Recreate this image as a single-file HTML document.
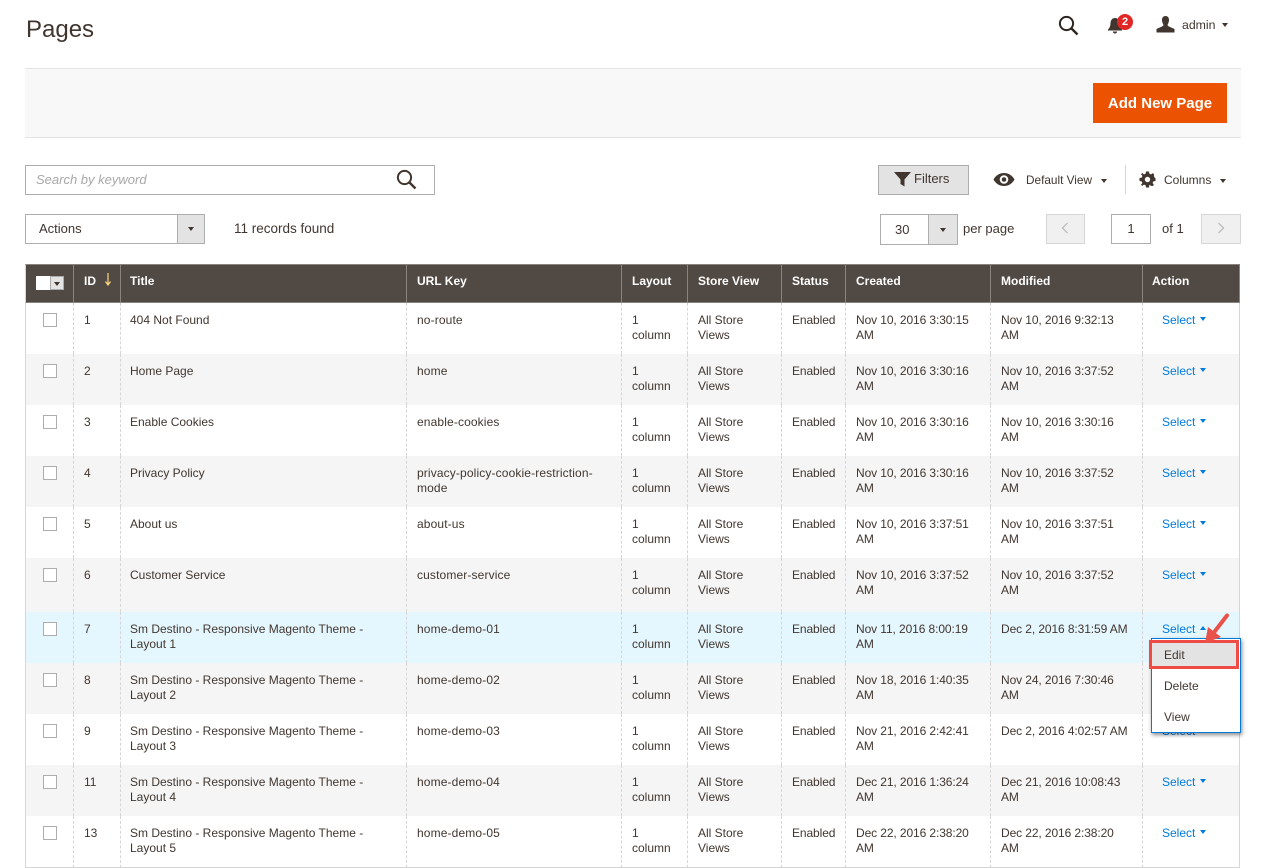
<!DOCTYPE html>
<html><head><meta charset="utf-8"><title>Pages</title>
<style>
*{box-sizing:border-box}
html,body{margin:0;padding:0;background:#fff}
body{width:1262px;height:868px;position:relative;overflow:hidden;font-family:"Liberation Sans",sans-serif;font-size:13px;color:#41362f}
.a{position:absolute;white-space:nowrap}
.box{position:absolute;border:1px solid #adadad;background:#fff}
.car{position:absolute;width:0;height:0;border-left:3px solid transparent;border-right:3px solid transparent;border-top:4px solid #41362f}
table{position:absolute;left:25px;top:264px;width:1215px;border-collapse:separate;border-spacing:0;table-layout:fixed;line-height:15px;font-size:12px}
th{height:39px;background:#514943;color:#fff;font-weight:bold;text-align:left;padding:0 0 4px 10px;border-left:1px solid #8a837f;border-top:1px solid #8a837f;border-bottom:1px solid #8a837f;font-size:12px;white-space:nowrap}
th:nth-child(3),th:nth-child(10){padding-left:9px}
th:last-child,td:last-child{border-right:1px solid #d6d6d6}
th:last-child{border-right-color:#8a837f}
td{vertical-align:top;padding:10px 4px 0 10px;border-left:1px dashed #d6d6d6;height:51px;white-space:nowrap}
td:first-child{border-left:1px solid #d6d6d6;padding:10px 0 0 17px}
th:first-child{border-left-color:#d6d6d6}
tr.g td{background:#f5f5f5}
tr.b td{background:#e5f7fe}
tr.l td{border-bottom:1px solid #d6d6d6;height:52px}
tr.t td{height:54px}
i.c{display:block;width:14px;height:14px;border:1px solid #adadad;background:#fff}
td:nth-child(3){padding-left:9px}
td:nth-child(4){letter-spacing:.13px}
td:nth-child(7),td:nth-child(8),td:nth-child(9){letter-spacing:-.1px}
td:nth-child(10){padding-left:19px;color:#007bdb}
td:nth-child(10) b{display:inline-block;width:0;height:0;margin:0 0 3px 5px;border-left:3px solid transparent;border-right:3px solid transparent;border-top:4px solid #007bdb}
</style></head><body>

<div class="a" style="left:26px;top:14px;font-size:24px;line-height:32px">Pages</div>

<svg class="a" style="left:1058px;top:15px" width="21" height="21" viewBox="0 0 21 21"><circle cx="8.5" cy="8.5" r="6.6" fill="none" stroke="#2e2520" stroke-width="2"/><path d="M13.5 13.5L19.5 19.5" stroke="#2e2520" stroke-width="2.4"/></svg>
<svg class="a" style="left:1107px;top:17px" width="16" height="17" viewBox="0 0 16 17"><path d="M8 1C5 1 3.600 3.500 3.500 6C3.400 9 2.800 10.800 1 12.500V13.500H15V12.500C13.200 10.800 12.600 9 12.500 6C12.400 3.500 11 1 8 1Z" fill="#41362f"/><path d="M6 14.500a2 2 0 0 0 4 0z" fill="#41362f"/></svg>
<div class="a" style="left:1117px;top:14px;width:16px;height:16px;border-radius:8px;background:#e22626;color:#fff;font-size:11px;font-weight:bold;line-height:16px;text-align:center">2</div>
<svg class="a" style="left:1156px;top:15px" width="19" height="18" viewBox="0 0 19 18"><path d="M9.500 1C7 1 5.800 3 6 5.500C6.200 7.500 7 9 7.500 10C7.500 11.500 3 12.500 0.500 14V17.500H18.500V14C16 12.500 11.500 11.500 11.500 10C12 9 12.800 7.500 13 5.500C13.200 3 12 1 9.500 1Z" fill="#41362f"/></svg>
<div class="a" style="left:1182px;top:18px;line-height:15px;font-size:12.3px">admin</div>
<div class="car" style="left:1222px;top:23px"></div>

<div class="a" style="left:25px;top:68px;width:1216px;height:70px;background:#f8f8f8;border-top:1px solid #e3e3e3;border-bottom:1px solid #e3e3e3"></div>
<div class="a" style="left:1093px;top:83px;width:134px;height:40px;background:#eb5202;color:#fff;font-weight:bold;font-size:15px;line-height:41px;text-align:center">Add New Page</div>

<div class="box" style="left:25px;top:165px;width:410px;height:30px"></div>
<div class="a" style="left:36px;top:172px;line-height:15px;font-style:italic;color:#a8a8a8">Search by keyword</div>
<svg class="a" style="left:396px;top:169px" width="21" height="21" viewBox="0 0 21 21"><circle cx="8.500" cy="8.500" r="6.600" fill="none" stroke="#41362f" stroke-width="2"/><path d="M13.500 13.500L19.500 19.500" stroke="#41362f" stroke-width="2.400"/></svg>

<div class="box" style="left:25px;top:214px;width:180px;height:30px"></div>
<div class="a" style="left:177px;top:214px;width:28px;height:30px;background:#e3e3e3;border:1px solid #adadad"></div>
<div class="car" style="left:188px;top:227px"></div>
<div class="a" style="left:39px;top:221px;line-height:15px">Actions</div>
<div class="a" style="left:234px;top:221px;line-height:15px;font-size:13.5px">11 records found</div>

<div class="a" style="left:878px;top:165px;width:91px;height:30px;background:#e3e3e3;border:1px solid #adadad"></div>
<svg class="a" style="left:894px;top:172px" width="17" height="15" viewBox="0 0 17 15"><path d="M0 0H17L10.500 7.500V14.500L6.500 12V7.500Z" fill="#41362f"/></svg>
<div class="a" style="left:914px;top:171px;line-height:15px">Filters</div>

<svg class="a" style="left:993px;top:172px" width="22" height="15" viewBox="0 0 22 15"><path fill-rule="evenodd" d="M0.500 7.500C3 3 6.800 1 11 1S19 3 21.500 7.500C19 12 15.200 14 11 14S3 12 0.500 7.500ZM11 3.200A4.300 4.300 0 1 0 11 11.800A4.300 4.300 0 1 0 11 3.200Z" fill="#41362f"/><circle cx="11" cy="7.500" r="2.300" fill="#41362f"/></svg>
<div class="a" style="left:1026px;top:173px;line-height:15px;font-size:11.8px">Default View</div>
<div class="car" style="left:1101px;top:179px"></div>
<div class="a" style="left:1125px;top:165px;width:1px;height:29px;background:#d6d6d6"></div>
<svg class="a" style="left:1139px;top:171px" width="17" height="17" viewBox="0 0 17 17"><path fill-rule="evenodd" d="M7 0.500H10L10.400 2.700L12 3.400L13.900 2.100L15.000 3.200L14.900 5L15.600 6.600L16.500 7V10L14.300 10.400L13.600 12L14.900 13.900L13.800 15L12 14.900L10.400 13.600L10 16.500H7L6.600 14.300L5 13.600L3.100 14.900L2 13.800L3.400 12L2.700 10.400L0.500 10V7L2.700 6.600L3.400 5L2.100 3.100L3.200 2L5 3.400L6.600 2.700ZM8.500 5.800A2.700 2.700 0 1 0 8.500 11.200A2.700 2.700 0 1 0 8.500 5.800Z" fill="#41362f"/></svg>
<div class="a" style="left:1164px;top:173px;line-height:15px;font-size:12px">Columns</div>
<div class="car" style="left:1220px;top:179px"></div>

<div class="box" style="left:880px;top:214px;width:78px;height:31px"></div>
<div class="a" style="left:928px;top:214px;width:30px;height:31px;background:#e3e3e3;border:1px solid #adadad"></div>
<div class="car" style="left:940px;top:228px"></div>
<div class="a" style="left:895px;top:222px;line-height:15px">30</div>
<div class="a" style="left:963px;top:221px;line-height:15px">per page</div>
<div class="a" style="left:1046px;top:214px;width:39px;height:30px;background:#f0f0f0;border:1px solid #d6d6d6"></div>
<svg class="a" style="left:1061px;top:222px" width="8" height="12" viewBox="0 0 8 12"><path d="M6.500 1L1.500 6L6.500 11" fill="none" stroke="#b5b5b5" stroke-width="1.200"/></svg>
<div class="box" style="left:1111px;top:214px;width:40px;height:30px"></div>
<div class="a" style="left:1111px;top:221px;width:40px;text-align:center;line-height:15px">1</div>
<div class="a" style="left:1162px;top:221px;line-height:15px">of 1</div>
<div class="a" style="left:1201px;top:214px;width:40px;height:30px;background:#f0f0f0;border:1px solid #d6d6d6"></div>
<svg class="a" style="left:1217px;top:222px" width="8" height="12" viewBox="0 0 8 12"><path d="M1.500 1L6.500 6L1.500 11" fill="none" stroke="#b5b5b5" stroke-width="1.200"/></svg>

<table>
<colgroup><col style="width:48px"><col style="width:47px"><col style="width:286px"><col style="width:215px"><col style="width:66px"><col style="width:94px"><col style="width:64px"><col style="width:145px"><col style="width:152px"><col style="width:98px"></colgroup>
<tr><th></th><th>ID</th><th>Title</th><th>URL Key</th><th>Layout</th><th>Store View</th><th>Status</th><th>Created</th><th>Modified</th><th>Action</th></tr>
<tr><td><i class="c"></i></td><td>1</td><td>404 Not Found</td><td>no-route</td><td>1<br>column</td><td>All Store<br>Views</td><td>Enabled</td><td>Nov 10, 2016 3:30:15<br>AM</td><td>Nov 10, 2016 9:32:13<br>AM</td><td>Select<b></b></td></tr>
<tr class="g"><td><i class="c"></i></td><td>2</td><td>Home Page</td><td>home</td><td>1<br>column</td><td>All Store<br>Views</td><td>Enabled</td><td>Nov 10, 2016 3:30:16<br>AM</td><td>Nov 10, 2016 3:37:52<br>AM</td><td>Select<b></b></td></tr>
<tr><td><i class="c"></i></td><td>3</td><td>Enable Cookies</td><td>enable-cookies</td><td>1<br>column</td><td>All Store<br>Views</td><td>Enabled</td><td>Nov 10, 2016 3:30:16<br>AM</td><td>Nov 10, 2016 3:30:16<br>AM</td><td>Select<b></b></td></tr>
<tr class="g"><td><i class="c"></i></td><td>4</td><td>Privacy Policy</td><td>privacy-policy-cookie-restriction-<br>mode</td><td>1<br>column</td><td>All Store<br>Views</td><td>Enabled</td><td>Nov 10, 2016 3:30:16<br>AM</td><td>Nov 10, 2016 3:37:52<br>AM</td><td>Select<b></b></td></tr>
<tr><td><i class="c"></i></td><td>5</td><td>About us</td><td>about-us</td><td>1<br>column</td><td>All Store<br>Views</td><td>Enabled</td><td>Nov 10, 2016 3:37:51<br>AM</td><td>Nov 10, 2016 3:37:51<br>AM</td><td>Select<b></b></td></tr>
<tr class="g t"><td><i class="c"></i></td><td>6</td><td>Customer Service</td><td>customer-service</td><td>1<br>column</td><td>All Store<br>Views</td><td>Enabled</td><td>Nov 10, 2016 3:37:52<br>AM</td><td>Nov 10, 2016 3:37:52<br>AM</td><td>Select<b></b></td></tr>
<tr class="b"><td><i class="c"></i></td><td>7</td><td>Sm Destino - Responsive Magento Theme -<br>Layout 1</td><td>home-demo-01</td><td>1<br>column</td><td>All Store<br>Views</td><td>Enabled</td><td>Nov 11, 2016 8:00:19<br>AM</td><td>Dec 2, 2016 8:31:59 AM</td><td>Select<b style="border-top:0;border-bottom:4px solid #007bdb"></b></td></tr>
<tr class="g"><td><i class="c"></i></td><td>8</td><td>Sm Destino - Responsive Magento Theme -<br>Layout 2</td><td>home-demo-02</td><td>1<br>column</td><td>All Store<br>Views</td><td>Enabled</td><td>Nov 18, 2016 1:40:35<br>AM</td><td>Nov 24, 2016 7:30:46<br>AM</td><td>Select<b></b></td></tr>
<tr><td><i class="c"></i></td><td>9</td><td>Sm Destino - Responsive Magento Theme -<br>Layout 3</td><td>home-demo-03</td><td>1<br>column</td><td>All Store<br>Views</td><td>Enabled</td><td>Nov 21, 2016 2:42:41<br>AM</td><td>Dec 2, 2016 4:02:57 AM</td><td>Select<b></b></td></tr>
<tr class="g"><td><i class="c"></i></td><td>11</td><td>Sm Destino - Responsive Magento Theme -<br>Layout 4</td><td>home-demo-04</td><td>1<br>column</td><td>All Store<br>Views</td><td>Enabled</td><td>Dec 21, 2016 1:36:24<br>AM</td><td>Dec 21, 2016 10:08:43<br>AM</td><td>Select<b></b></td></tr>
<tr class="l"><td><i class="c"></i></td><td>13</td><td>Sm Destino - Responsive Magento Theme -<br>Layout 5</td><td>home-demo-05</td><td>1<br>column</td><td>All Store<br>Views</td><td>Enabled</td><td>Dec 22, 2016 2:38:20<br>AM</td><td>Dec 22, 2016 2:38:20<br>AM</td><td>Select<b></b></td></tr>
</table>

<div class="a" style="left:36px;top:276px;width:28px;height:14px;background:#fff"></div>
<div class="a" style="left:50px;top:276px;width:14px;height:14px;background:#e3e3e3;border:1px solid #adadad"></div>
<div class="car" style="left:54px;top:282px"></div>
<svg class="a" style="left:104px;top:273px" width="8" height="13" viewBox="0 0 8 13"><path d="M4 0V11M1.500 8.500L4 12L6.500 8.500" fill="none" stroke="#ffd780" stroke-width="1.200"/></svg>

<div class="a" style="left:1151px;top:638px;width:90px;height:95px;background:#fff;border:1px solid #007bdb;box-shadow:1px 2px 4px rgba(0,0,0,.45)"></div>
<div class="a" style="left:1152px;top:640px;width:87px;height:29px;background:#e3e3e3"></div>
<div class="a" style="left:1164px;top:648px;line-height:15px;font-size:12px">Edit</div>
<div class="a" style="left:1164px;top:679px;line-height:15px;font-size:12px">Delete</div>
<div class="a" style="left:1164px;top:710px;line-height:15px;font-size:12px">View</div>
<div class="a" style="left:1149px;top:640px;width:90px;height:29px;border:3px solid #ee4b44"></div>
<svg class="a" style="left:1200px;top:610px" width="32" height="38" viewBox="0 0 32 38"><path d="M27 5.500L12 25" stroke="#e8524a" stroke-width="4" stroke-linecap="round"/><path d="M5 33L8 17L21 27Z" fill="#e8524a"/></svg>

</body></html>
